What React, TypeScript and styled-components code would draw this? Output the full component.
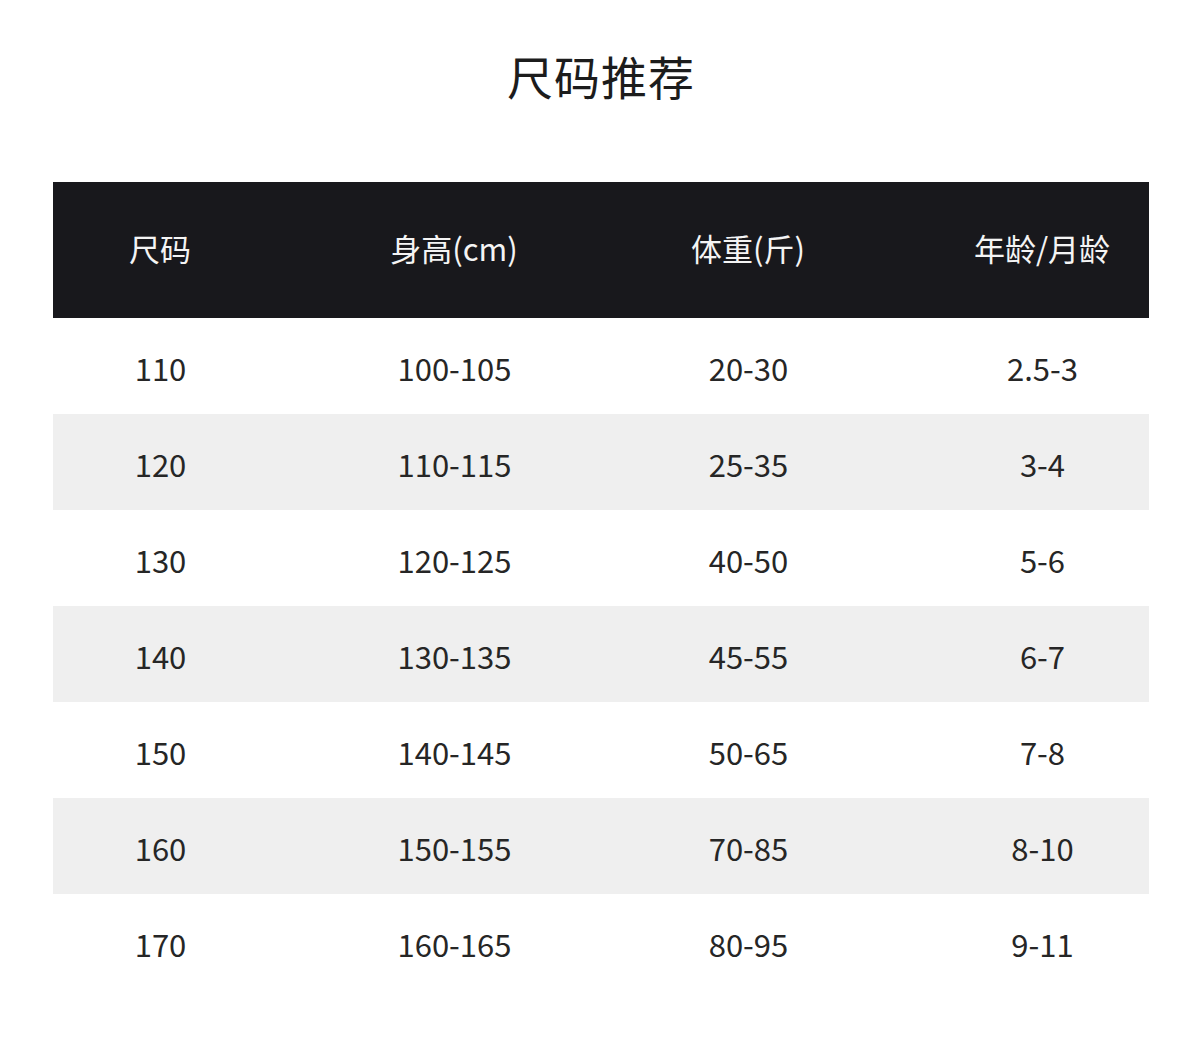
import React from "react";
import styled, { createGlobalStyle } from "styled-components";

const GlobalStyle = createGlobalStyle`
  html, body {
    margin: 0;
    padding: 0;
    background: #ffffff;
  }
  body {
    font-family: "Noto Sans CJK SC", "Noto Sans", sans-serif;
  }
`;

const Page = styled.div`
  width: 1199px;
  min-height: 1038px;
  background: #ffffff;
  display: flex;
  flex-direction: column;
  align-items: center;
`;

const Title = styled.h1`
  margin: 52px 0 0 3px;
  height: 46px;
  line-height: 46px;
  font-size: 46px;
  font-weight: 400;
  color: #1c1c1c;
  letter-spacing: 1px;
`;

const Table = styled.div`
  margin: 84px 0 0 53px;
  align-self: flex-start;
  width: 1096px;
  display: flex;
  flex-direction: column;
`;

const Row = styled.div<{ $variant: "head" | "odd" | "even" }>`
  display: grid;
  grid-template-columns: repeat(4, 214px);
  column-gap: 80px;
  align-items: center;
  height: ${(p) => (p.$variant === "head" ? "136px" : "96px")};
  background: ${(p) =>
    p.$variant === "head" ? "#18181c" : p.$variant === "even" ? "#efefef" : "#ffffff"};
  color: ${(p) => (p.$variant === "head" ? "#f4f4f4" : "#262626")};
`;

const Cell = styled.div<{ $head?: boolean }>`
  text-align: center;
  font-size: 31px;
  line-height: 1;
  font-weight: 400;
  padding: ${(p) => (p.$head ? "0 0 5px" : "2px 0 0 1px")};
`;

const headers = ["尺码", "身高(cm)", "体重(斤)", "年龄/月龄"];
const rows = [
  ["110", "100-105", "20-30", "2.5-3"],
  ["120", "110-115", "25-35", "3-4"],
  ["130", "120-125", "40-50", "5-6"],
  ["140", "130-135", "45-55", "6-7"],
  ["150", "140-145", "50-65", "7-8"],
  ["160", "150-155", "70-85", "8-10"],
  ["170", "160-165", "80-95", "9-11"],
];

export default function App() {
  return (
    <>
      <GlobalStyle />
      <Page>
        <Title>尺码推荐</Title>
        <Table>
          <Row $variant="head">
            {headers.map((h) => (
              <Cell $head key={h}>
                {h}
              </Cell>
            ))}
          </Row>
          {rows.map((r, i) => (
            <Row key={r[0]} $variant={i % 2 === 1 ? "even" : "odd"}>
              {r.map((c, j) => (
                <Cell key={j}>{c}</Cell>
              ))}
            </Row>
          ))}
        </Table>
      </Page>
    </>
  );
}
